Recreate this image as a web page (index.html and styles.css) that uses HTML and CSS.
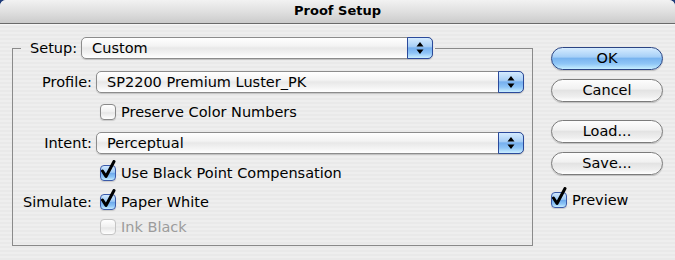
FILE: index.html
```html
<!DOCTYPE html>
<html>
<head>
	<meta charset="utf-8">
	<title>Proof Setup</title>
	<link rel="stylesheet" href="styles.css">
</head>
<body>
	<div class="window">
		<div class="titlebar">Proof Setup</div>
		<div class="main">
			<fieldset class="group">
				<legend class="setup">
					<span class="lbl">Setup:</span>
					<div class="popup popup-setup">
						<span class="popup-text">Custom</span>
						<span class="popup-arrows"><svg width="8" height="12" viewBox="0 0 8 12"><path d="M4 0 L7.5 4.5 L0.5 4.5 Z M4 12 L7.5 7.5 L0.5 7.5 Z" fill="#000"/></svg></span>
					</div>
				</legend>
				<div class="rows">
					<span class="row-lbl">Profile:</span>
					<div class="popup">
						<span class="popup-text">SP2200 Premium Luster_PK</span>
						<span class="popup-arrows"><svg width="8" height="12" viewBox="0 0 8 12"><path d="M4 0 L7.5 4.5 L0.5 4.5 Z M4 12 L7.5 7.5 L0.5 7.5 Z" fill="#000"/></svg></span>
					</div>

					<span></span>
					<div class="check"><span class="box"></span><span>Preserve Color Numbers</span></div>

					<span class="row-lbl">Intent:</span>
					<div class="popup">
						<span class="popup-text">Perceptual</span>
						<span class="popup-arrows"><svg width="8" height="12" viewBox="0 0 8 12"><path d="M4 0 L7.5 4.5 L0.5 4.5 Z M4 12 L7.5 7.5 L0.5 7.5 Z" fill="#000"/></svg></span>
					</div>

					<span></span>
					<div class="check"><span class="box on"><svg class="tick" width="18" height="20" viewBox="0 0 18 20"><path d="M3.5 11 L7 16.5 L15 1.5" fill="none" stroke="#000" stroke-width="3" stroke-linecap="round" stroke-linejoin="round"/></svg></span><span>Use Black Point Compensation</span></div>

					<span class="row-lbl">Simulate:</span>
					<div class="check"><span class="box on"><svg class="tick" width="18" height="20" viewBox="0 0 18 20"><path d="M3.5 11 L7 16.5 L15 1.5" fill="none" stroke="#000" stroke-width="3" stroke-linecap="round" stroke-linejoin="round"/></svg></span><span>Paper White</span></div>

					<span></span>
					<div class="check off"><span class="box"></span><span>Ink Black</span></div>
				</div>
			</fieldset>

			<div class="buttons">
				<div class="btn default">OK</div>
				<div class="btn">Cancel</div>
				<div class="btn gap">Load...</div>
				<div class="btn">Save...</div>
				<div class="check preview"><span class="box on"><svg class="tick" width="18" height="20" viewBox="0 0 18 20"><path d="M3.5 11 L7 16.5 L15 1.5" fill="none" stroke="#000" stroke-width="3" stroke-linecap="round" stroke-linejoin="round"/></svg></span><span>Preview</span></div>
			</div>
		</div>
	</div>
</body>
</html>
```

FILE: styles.css
```css
	* {
		box-sizing: border-box;
	}
	html, body {
		margin: 0;
		background-color: #1f3c7a;
	}
	body {
		font-family: "DejaVu Sans", "Lucida Grande", sans-serif;
		font-size: 14.5px;
		color: #000;
	}
	.window {
		width: 675px;
		height: 260px;
		border-radius: 6px 6px 0 0;
		overflow: hidden;
		background-color: #ececec;
		background-image: repeating-linear-gradient(to bottom, #eeeeee 0, #eeeeee 2px, #e9e9e9 2px, #e9e9e9 4px);
	}
	.titlebar {
		height: 24px;
		line-height: 22px;
		text-align: center;
		font-weight: bold;
		font-size: 13px;
		background-image: linear-gradient(to bottom, #f2f2f2 0%, #e0e0e0 50%, #cbcbcb 100%);
		border-bottom: 1px solid #6a6a6a;
		box-shadow: 0 1px 0 #f6f6f6;
	}
	.main {
		display: flex;
		padding: 13px 12px 0 12px;
	}

	/* group box */
	.group {
		width: 521px;
		margin: 0;
		padding: 0 8px 5px 0;
		border: 1px solid #8a8a8a;
		min-inline-size: 0;
	}
	.setup {
		display: flex;
		align-items: center;
		margin-left: 8px;
		padding: 0 2px 0 9px;
	}
	.setup .lbl {
		margin-right: 4px;
	}
	.rows {
		display: grid;
		grid-template-columns: 79px 1fr;
		grid-template-rows: 23px 38px 24px 35px 24px 26px;
		column-gap: 4px;
		align-items: center;
		padding-top: 11px;
	}
	.row-lbl {
		text-align: right;
	}

	/* popup menus */
	.popup {
		display: flex;
		height: 22px;
		border: 1px solid #8c8c8c;
		border-radius: 5px;
		background-image: linear-gradient(to bottom, #ffffff 0%, #f3f3f3 40%, #e8e8e8 50%, #f5f5f5 80%, #ffffff 100%);
		box-shadow: 0 1px 1px rgba(0,0,0,0.18);
	}
	.popup-setup {
		width: 352px;
	}
	.popup-text {
		flex: 1;
		line-height: 20px;
		padding-left: 10px;
		white-space: nowrap;
	}
	.popup-arrows {
		width: 26px;
		margin: -1px -1px -1px 0;
		border: 1px solid #2b4a9b;
		border-radius: 0 5px 5px 0;
		display: flex;
		align-items: center;
		justify-content: center;
		background-image: linear-gradient(to bottom, #d5ebff 0%, #a9cff6 42%, #76afee 50%, #8ec4f7 75%, #cbefff 100%);
	}

	/* checkboxes */
	.check {
		display: flex;
		align-items: center;
		margin-left: 4px;
		white-space: nowrap;
	}
	.box {
		position: relative;
		width: 16px;
		height: 16px;
		margin-right: 5px;
		border: 1px solid #8a8a8a;
		border-radius: 4px;
		background-image: linear-gradient(to bottom, #ffffff 0%, #f0f0f0 50%, #e6e6e6 55%, #ffffff 100%);
		box-shadow: 0 1px 1px rgba(0,0,0,0.15);
	}
	.box.on {
		border-color: #3b5aa8;
		background-image: linear-gradient(to bottom, #d0e8ff 0%, #9ecaf5 45%, #6eaaec 52%, #8cc4f6 78%, #c6ecff 100%);
	}
	.tick {
		position: absolute;
		left: -2px;
		top: -6px;
	}
	.check.off {
		color: #9c9c9c;
	}
	.check.off .box {
		border-color: #c4c4c4;
		box-shadow: none;
	}

	/* buttons */
	.buttons {
		display: flex;
		flex-direction: column;
		width: 112px;
		margin-left: 18px;
		padding-top: 10px;
	}
	.btn {
		height: 23px;
		line-height: 21px;
		text-align: center;
		border: 1px solid #7b7b7b;
		border-radius: 12px;
		margin-bottom: 9px;
		background-image: linear-gradient(to bottom, #fdfdfd 0%, #f1f1f1 42%, #e3e3e3 50%, #efefef 80%, #ffffff 100%);
		box-shadow: 0 1px 1px rgba(0,0,0,0.18);
	}
	.btn.default {
		border-color: #2c4583;
		background-image: linear-gradient(to bottom, #d6ecff 0%, #a7d0f7 42%, #79b4ef 50%, #8fc6f6 75%, #c6eeff 100%);
	}
	.btn.gap {
		margin-top: 9px;
	}
	.preview {
		margin: 6px 0 0 0;
		height: 20px;
	}
```
